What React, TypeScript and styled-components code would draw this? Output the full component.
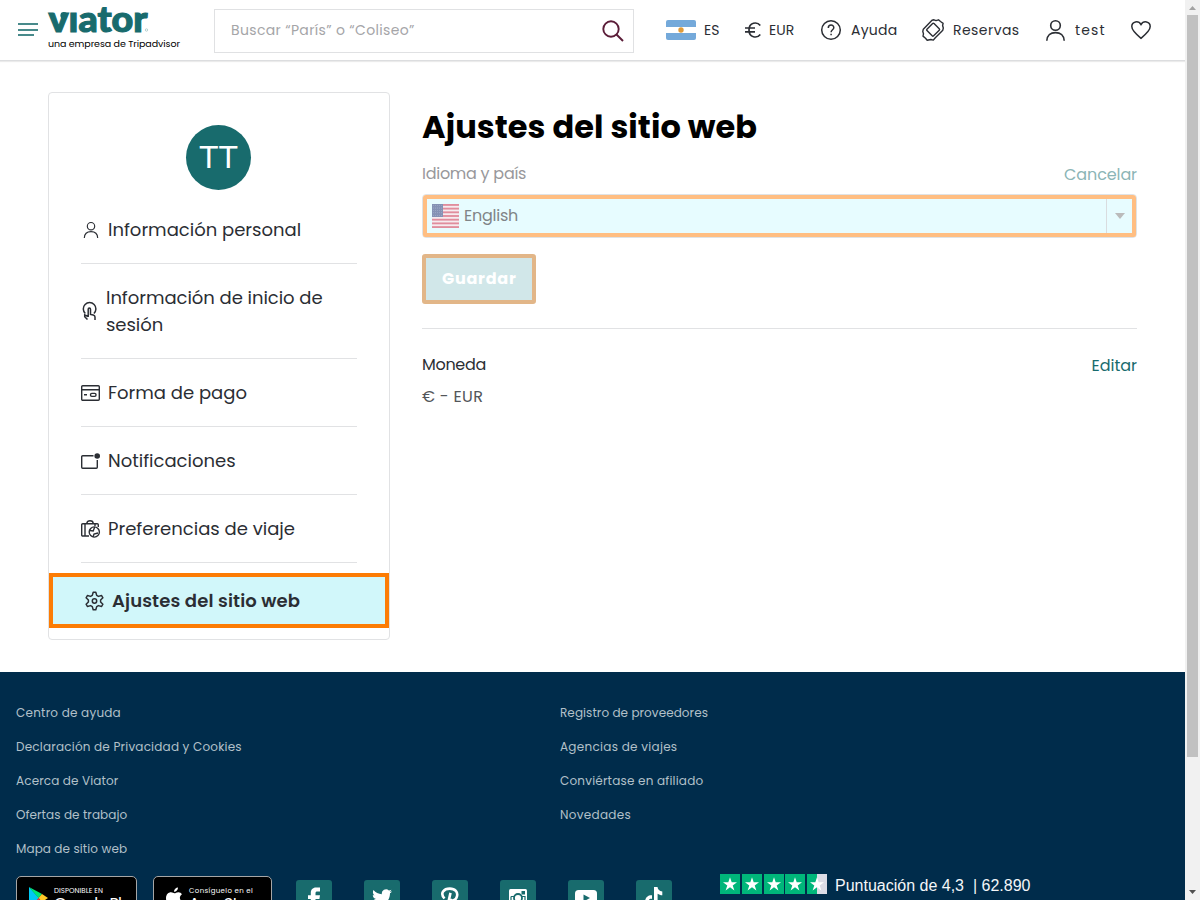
import React from 'react';
import styled, { createGlobalStyle, css } from 'styled-components';

const Global = createGlobalStyle`
  * { box-sizing: border-box; }
  body { margin: 0; background: #fff; overflow: hidden; }
  body, button { font-family: Poppins, Inter, "Open Sans", sans-serif; }
`;

const teal = '#186b6d';
const ink = '#2b2e34';
const line = '#e1e2e4';

const Label = styled.span<{ $tracking?: number }>`
  letter-spacing: ${(p) => p.$tracking ?? 0}px;
`;

const Screen = styled.div`
  display: flex;
  width: 1200px;
  height: 900px;
  overflow: hidden;
`;
const Page = styled.div`
  width: 1185px;
  height: 900px;
  display: flex;
  flex-direction: column;
  overflow: hidden;
`;

/* Scroll bar */
const Scroll = styled.div`
  width: 15px;
  background: #f1f1f1;
  display: flex;
  flex-direction: column;
  align-items: center;
  justify-content: space-between;
`;
const ScrollArrow = styled.svg`
  display: block;
  width: 15px;
  height: 15px;
`;
const Thumb = styled.div`
  width: 11px;
  height: 742px;
  background: #c1c1c1;
  margin-bottom: auto;
`;

/* Header */
const Header = styled.header`
  height: 61px;
  flex: none;
  display: flex;
  align-items: center;
  border-bottom: 1px solid #dcdddf;
  box-shadow: 0 1px 1px rgba(0, 0, 0, 0.08);
  padding-left: 18px;
`;
const Brand = styled.div`
  width: 166px;
  margin-left: 10px;
  height: 60px;
  padding-top: 6px;
`;
const Logo = styled.svg`
  display: block;
  width: 102px;
  height: 28px;
  overflow: visible;
`;
const Tagline = styled.div`
  font-size: 9.5px;
  line-height: 14px;
  color: #000;
  margin-top: 3px;
  letter-spacing: -0.08px;
  white-space: nowrap;
`;
const Search = styled.div`
  width: 420px;
  height: 44px;
  border: 1px solid #e0e1e3;
  display: flex;
  align-items: center;
  justify-content: space-between;
  padding: 0 9px 0 16px;
  font-size: 14px;
  color: #a5a5a8;
  margin-top: 1px;
`;
const NavItem = styled.a<{ $w: number; $gap: number }>`
  display: flex;
  align-items: center;
  width: ${(p) => p.$w}px;
  gap: ${(p) => p.$gap}px;
  font-size: 14px;
  color: ${ink};
`;
const Nav = styled.nav`
  display: flex;
  align-items: center;
  margin-left: 32px;
`;
const Icon = styled.svg<{ $w: number; $h: number; $stroke?: number }>`
  display: block;
  flex: none;
  width: ${(p) => p.$w}px;
  height: ${(p) => p.$h}px;
  fill: none;
  stroke: currentColor;
  stroke-width: ${(p) => p.$stroke ?? 1.5};
  overflow: visible;
`;

/* Body */
const Body = styled.main`
  height: 611px;
  flex: none;
  display: flex;
  padding: 31px 48px 0;
  gap: 32px;
`;
const Card = styled.aside`
  width: 342px;
  height: 548px;
  border: 1px solid ${line};
  border-radius: 4px;
  padding-top: 32px;
  display: flex;
  flex-direction: column;
`;
const Avatar = styled.div`
  width: 65px;
  height: 65px;
  margin: 0 0 6px 137px;
  border-radius: 50%;
  background: ${teal};
  color: #fff;
  font: 32px/65px "Liberation Sans", Arial, sans-serif;
  text-align: center;
`;
const MenuItem = styled.div<{ $active?: boolean; $gap?: number }>`
  display: flex;
  align-items: center;
  gap: ${(p) => p.$gap ?? 8}px;
  font-size: 18px;
  line-height: 27px;
  color: ${ink};
  ${(p) =>
    p.$active
      ? css`
          margin-top: 10px;
          height: 55px;
          border: 4px solid #fc7c04;
          background: #d1f7fa;
          padding-left: 32px;
          font-weight: 600;
        `
      : css`
          margin: 0 32px;
          padding: 20px 0;
          border-bottom: 1px solid ${line};
        `}
`;
const Settings = styled.section`
  width: 715px;
`;
const Title = styled.h1`
  margin: 11px 0 0;
  font-size: 32px;
  line-height: 48px;
  font-weight: 700;
  letter-spacing: 0.08px;
  color: #000;
`;
const Row = styled.div<{ $top: number; $muted?: boolean }>`
  display: flex;
  justify-content: space-between;
  margin-top: ${(p) => p.$top}px;
  font-size: 16px;
  line-height: 24px;
  color: ${(p) => (p.$muted ? '#98989b' : ink)};
`;
const Action = styled.a<{ $muted?: boolean }>`
  color: ${(p) => (p.$muted ? '#8bb5b6' : teal)};
  letter-spacing: ${(p) => (p.$muted ? '-0.1px' : '0')};
  padding-top: 1px;
`;
const Select = styled.div`
  margin-top: 7px;
  height: 44px;
  border: 1px solid #dfe3e6;
  border-radius: 4px;
  display: flex;
`;
const SelectInner = styled.div`
  flex: 1;
  border: 4px solid #ffbe82;
  border-radius: 3px 3px 2px 2px;
  background: #e7fcff;
  display: flex;
  align-items: center;
  padding-left: 5px;
  gap: 5px;
  font-size: 16px;
  line-height: 24px;
  color: #808487;
`;
const Arrow = styled.div`
  margin-left: auto;
  width: 26px;
  height: 34px;
  border-left: 1px solid #d9dcdf;
  display: flex;
  align-items: center;
  justify-content: center;
`;
const Save = styled.button`
  display: flex;
  align-items: center;
  width: 114px;
  height: 50px;
  margin-top: 16px;
  padding: 0 0 2px 16px;
  border: 4px solid #e2b688;
  border-radius: 3px;
  background: #d1e7e9;
  color: #fff;
  font-size: 16px;
  font-weight: 700;
  letter-spacing: 0.75px;
`;
const Rule = styled.div`
  height: 1px;
  background: ${line};
  margin-top: 24px;
`;
const Value = styled.div`
  margin-top: 7px;
  font-size: 16px;
  line-height: 24px;
  letter-spacing: 0.3px;
  color: #53565a;
`;

/* Footer */
const Footer = styled.footer`
  flex: 1;
  min-height: 0;
  background: #002c4b;
  padding: 24px 16px 0;
  overflow: hidden;
`;
const Columns = styled.div`
  display: grid;
  grid-template-columns: 544px 1fr;
`;
const Column = styled.div`
  display: flex;
  flex-direction: column;
`;
const FooterLink = styled.a<{ $tracking: number }>`
  height: 34px;
  line-height: 34px;
  font-size: 12px;
  letter-spacing: ${(p) => p.$tracking}px;
  color: #b2c0c9;
`;
const Bottom = styled.div`
  display: flex;
  align-items: flex-start;
  margin-top: 10px;
`;
const Store = styled.div<{ $w: number; $ml?: number }>`
  width: ${(p) => p.$w}px;
  height: 40px;
  margin-left: ${(p) => p.$ml ?? 0}px;
  background: #000;
  border: 1px solid #a6a6a6;
  border-radius: 5px;
  display: flex;
  padding: 9px 0 0 11px;
  gap: 6px;
  color: #fff;
`;
const StoreText = styled.div`
  display: flex;
  flex-direction: column;
`;
const Small = styled.span<{ $tracking: number }>`
  font-size: 7px;
  line-height: 9px;
  height: 9px;
  white-space: nowrap;
  letter-spacing: ${(p) => p.$tracking}px;
`;
const Big = styled.span<{ $tracking: number }>`
  font-size: 16px;
  line-height: 18px;
  letter-spacing: ${(p) => p.$tracking}px;
  white-space: nowrap;
`;
const Socials = styled.div`
  display: flex;
  gap: 32px;
  margin: 4px 0 0 24px;
`;
const Social = styled.div`
  width: 36px;
  height: 36px;
  border-radius: 3px;
  background: ${teal};
  display: flex;
  align-items: center;
  justify-content: center;
`;
const Rating = styled.div`
  margin: -2px 0 0 48px;
  display: flex;
  gap: 8px;
  color: #f4f6f8;
  font: 16px/23px "Liberation Sans", Arial, sans-serif;
  white-space: pre;
`;
const Stars = styled.div`
  display: flex;
  gap: 1.75px;
  height: 20px;
`;
const Star = styled.div<{ $half?: boolean }>`
  width: 20px;
  height: 20px;
  background: ${(p) => (p.$half ? 'linear-gradient(90deg,#00b67a 50%,#dcdce6 50%)' : '#00b67a')};
`;

const PersonShape = () => (
  <>
    <circle cx="9.5" cy="5.5" r="4.8" />
    <path d="M.8 20.800C1 15.500 4.600 12.600 9.500 12.600s8.500 2.900 8.700 8.200" />
  </>
);

const UsFlag = () => (
  <Icon viewBox="0 0 27 24" $w={27} $h={24} $stroke={0}>
    <rect width="27" height="24" fill="#f6ebef" />
    {[0, 1, 2, 3, 4, 5, 6].map((i) => (
      <rect key={i} y={i * 3.69} width="27" height="1.85" fill="#e08d9d" />
    ))}
    <rect width="11" height="13" fill="#8592b5" />
    {[0, 1, 2, 3, 4].map((r) =>
      [0, 1, 2, 3, 4].map((c) => (
        <circle key={`${r}-${c}`} cx={1.3 + c * 2.1} cy={1.6 + r * 2.4} r=".45" fill="#b9c2d8" />
      )),
    )}
  </Icon>
);

const starPath = 'M10 3.200l1.700 5.100h5.300l-4.300 3.100 1.700 5.100-4.400-3.200-4.400 3.200 1.700-5.100L3 8.300h5.300z';

const footerLinks: { label: string; tracking: number }[][] = [
  [
    { label: 'Centro de ayuda', tracking: 0.22 },
    { label: 'Declaración de Privacidad y Cookies', tracking: 0.2 },
    { label: 'Acerca de Viator', tracking: 0.13 },
    { label: 'Ofertas de trabajo', tracking: 0.08 },
    { label: 'Mapa de sitio web', tracking: 0.1 },
  ],
  [
    { label: 'Registro de proveedores', tracking: 0.07 },
    { label: 'Agencias de viajes', tracking: 0.28 },
    { label: 'Conviértase en afiliado', tracking: 0.2 },
    { label: 'Novedades', tracking: 0.3 },
  ],
];

const socialIcons = [
  <path key="f" fill="#fff" d="M6.800 20v-9H4V7.200h2.800V5C6.800 1.800 8.700-.5 12-.5h4V3.500h-2.500c-1.600 0-2 .6-2 1.800v1.900H16l-.6 3.800h-3.900V20z" />,
  <path key="t" fill="#fff" d="M20 3.200c-.8.4-1.500.5-2.300.6.8-.5 1.400-1.200 1.700-2.100-.8.4-1.600.8-2.500.9a4.100 4.100 0 0 0-7 3.700C6.500 6.200 3.500 4.600 1.500 2.100.4 4 1 6.300 2.700 7.500c-.7 0-1.300-.2-1.900-.5 0 2 1.400 3.700 3.300 4.100-.6.100-1.200.2-1.800 0 .5 1.700 2 2.800 3.800 2.900A8.300 8.300 0 0 1 0 15.700C8.500 20.500 18 15 18 5.300c.8-.6 1.500-1.300 2-2.100z" />,
  <path key="p" fill="none" stroke="#fff" strokeWidth="2.600" d="M4.500 10.500C-.5 5 4 .6 9.800.6c5.500 0 8.200 3.600 7.200 7.600-1.300 5-5.600 5.200-6.900 2.800M10.500 4.900L7.500 18" />,
  <g key="i"><rect x="1" y="1" width="18" height="18" rx="1.500" fill="#fff" /><path d="M3 8.500h3M14 8.500h3v8H3v-8" fill="none" stroke={teal} strokeWidth="1.200" /><circle cx="10" cy="10" r="4" fill="#fff" stroke={teal} strokeWidth="1.800" /><rect x="13.500" y="3" width="3.500" height="3.500" fill={teal} /></g>,
  <g key="y"><rect x="-1" y="2" width="22" height="16" rx="3.500" fill="#fff" /><path d="M7.500 6.500v7l6.500-3.500z" fill={teal} /></g>,
  <path key="k" fill="#fff" d="M10-1h3.500c.3 2.500 2 4.300 4.800 4.600v3.600c-1.800 0-3.400-.6-4.700-1.500v7c0 7-10 8-12 2C.2 10.500 3.600 6.700 8 7.200v3.700c-2-.5-3.600.7-3.400 2.600.3 3 5.400 2.800 5.400-1z" />,
];

export default function App() {
  return (
    <Screen>
      <Global />
      <Page>
        <Header>
          <Icon viewBox="0 0 20 14" $w={20} $h={14} $stroke={1.8}>
            <path d="M0 1h20M0 7h20M0 12h16" stroke="#488a8b" />
          </Icon>
          <Brand>
            <Logo viewBox="0 0 102 28" aria-label="viator">
              <g fill={teal} stroke={teal} strokeWidth="1.1">
                <text x="0.5" y="25.500" fontFamily="Lato, sans-serif" fontWeight="900" fontSize="36" textLength="99" lengthAdjust="spacingAndGlyphs">vıator</text>
                <circle cx="15.800" cy="9.500" r="3.400" stroke="none" />
              </g>
              <circle cx="98.500" cy="24" r="1.200" fill="#fff" stroke="#8bb5b6" strokeWidth=".6" />
            </Logo>
            <Tagline>una empresa de Tripadvisor</Tagline>
          </Brand>
          <Search>
            <Label $tracking={0.35}>Buscar “París” o “Coliseo”</Label>
            <Icon viewBox="0 0 22 22" $w={22} $h={22} $stroke={1.9}>
              <g stroke="#5b1d38"><circle cx="9" cy="9" r="7.700" /><path d="M14.500 14.500l6.500 6.500" /></g>
            </Icon>
          </Search>
          <Nav>
            <NavItem $w={79} $gap={8}>
              <Icon viewBox="0 0 30 20" $w={30} $h={20} $stroke={0}>
                <rect width="30" height="20" rx="2" fill="#74a9da" />
                <rect y="7" width="30" height="6" fill="#fff" />
                <circle cx="15" cy="10" r="2.700" fill="#e09b3a" />
              </Icon>
              <Label>ES</Label>
            </NavItem>
            <NavItem $w={76} $gap={8}>
              <Icon viewBox="0 0 16 16" $w={16} $h={16} $stroke={1.7}>
                <path d="M15.300 3.500C12-.6 4 .2 4 8s8 8.600 11.300 4.500M0 6h10M0 9.800h10" />
              </Icon>
              <Label>EUR</Label>
            </NavItem>
            <NavItem $w={101} $gap={10}>
              <Icon viewBox="0 0 20 20" $w={20} $h={20} $stroke={1.5}>
                <circle cx="10" cy="10" r="9.300" />
                <path d="M7.300 8c0-4 5.700-3.800 5.500-.2-.1 2-2.700 2-2.700 4.400M10.100 13.800v1.500" />
              </Icon>
              <Label $tracking={0.25}>Ayuda</Label>
            </NavItem>
            <NavItem $w={124} $gap={9}>
              <Icon viewBox="0 0 22 22" $w={22} $h={22} $stroke={1.4}>
                <path strokeLinejoin="round" d="M10 1.200l2-.4 2 .8 2.500-.8 2 1.700 2.600 1.800-.5 2.200.7 2.500-.5 2.200-7.500 7.500-2 2.400-2.400-.6-3.700.8-1.700-2-2.500-2.200.5-2.200-.7-2.400.5-2.300z" />
                <rect x="6.400" y="5.700" width="9.400" height="10" rx="1" transform="rotate(45 11.100 10.700)" />
              </Icon>
              <Label $tracking={0.45}>Reservas</Label>
            </NavItem>
            <NavItem $w={85} $gap={10}>
              <Icon viewBox="0 0 19 21" $w={19} $h={21} $stroke={1.6}><PersonShape /></Icon>
              <Label $tracking={1.1}>test</Label>
            </NavItem>
            <NavItem $w={20} $gap={0}>
              <Icon viewBox="0 0 20 18" $w={20} $h={18} $stroke={1.5}>
                <path d="M10 17.300C6 14 .8 9.800.8 5.600.8.300 7.500-.8 10 3.600 12.500-.8 19.200.3 19.200 5.600c0 4.200-5.200 8.400-9.200 11.700z" />
              </Icon>
            </NavItem>
          </Nav>
        </Header>

        <Body>
          <Card>
            <Avatar>TT</Avatar>
            <MenuItem $gap={7}>
              <Icon viewBox="-2.500 -2.500 24 26" $w={20} $h={20} $stroke={1.5}><PersonShape /></Icon>
              <Label>Información personal</Label>
            </MenuItem>
            <MenuItem $gap={7}>
              <Icon viewBox="0 0 18 20" $w={18} $h={20} $stroke={1.5}>
                <path d="M4.300 12.500a6.300 6.300 0 1 1 8.600 0" />
                <path d="M7.200 16V8.200c0-1.600 2.300-1.600 2.300 0v5.300l2.700.6c1.300.3 1.800 1 1.800 2v3M7.200 15.500l-3.500-1.500v1.800l2.800 2.700" />
              </Icon>
              <Label $tracking={-0.04}>Información de inicio de sesión</Label>
            </MenuItem>
            <MenuItem $gap={8}>
              <Icon viewBox="0 0 19 16" $w={19} $h={16} $stroke={1.4}>
                <rect x=".7" y=".7" width="17.600" height="14.600" rx="1" />
                <path d="M1 4.700h17M3 9.800h3" />
                <rect x="9.500" y="8.400" width="5.500" height="3" rx="1.300" />
              </Icon>
              <Label>Forma de pago</Label>
            </MenuItem>
            <MenuItem $gap={8}>
              <Icon viewBox="0 0 19 16" $w={19} $h={16} $stroke={1.4}>
                <path d="M12.500 2.700H1.700a1 1 0 0 0-1 1v10.600a1 1 0 0 0 1 1h13.600a1 1 0 0 0 1-1V7" />
                <circle cx="16.200" cy="3" r="2.800" fill={ink} stroke="none" />
              </Icon>
              <Label>Notificaciones</Label>
            </MenuItem>
            <MenuItem $gap={8}>
              <Icon viewBox="0 0 19 18" $w={19} $h={18} $stroke={1.4}>
                <path d="M8 16H1.700a1 1 0 0 1-1-1V4.700a1 1 0 0 1 1-1h14.600a1 1 0 0 1 1 1V7M4 3.700V16M14 3.700V6M5.800 3.500C5.800-.2 12.200-.2 12.200 3.500" />
                <circle cx="13.300" cy="12" r="5.100" />
                <path d="M8.700 10.500l3.500.5 1.500-4M12 17l1-3 4-1" />
              </Icon>
              <Label>Preferencias de viaje</Label>
            </MenuItem>
            <MenuItem $active $gap={8}>
              <Icon viewBox="0 0 19 20" $w={19} $h={20} $stroke={1.5}>
                <path d="M8.200 1.200h2.600l.9 3.200 1.700 1 3.200-.9 1.300 2.300L15.600 9v2l2.300 2.200-1.300 2.300-3.200-.9-1.700 1-.9 3.200H8.200l-.9-3.200-1.700-1-3.200.9-1.300-2.300L3.400 11V9L1.100 6.800l1.300-2.300 3.200.9 1.700-1z" strokeLinejoin="round" />
                <circle cx="9.500" cy="10" r="2.200" />
              </Icon>
              <Label $tracking={0.13}>Ajustes del sitio web</Label>
            </MenuItem>
          </Card>

          <Settings>
            <Title>Ajustes del sitio web</Title>
            <Row $top={11} $muted>
              <Label $tracking={-0.27}>Idioma y país</Label>
              <Action $muted>Cancelar</Action>
            </Row>
            <Select>
              <SelectInner>
                <UsFlag />
                <Label $tracking={-0.25}>English</Label>
                <Arrow>
                  <Icon viewBox="0 0 10 6" $w={10} $h={6} $stroke={0}><path d="M0 0h10L5 6z" fill="#bbb" /></Icon>
                </Arrow>
              </SelectInner>
            </Select>
            <Save>Guardar</Save>
            <Rule />
            <Row $top={24}>
              <Label $tracking={-0.3}>Moneda</Label>
              <Action>Editar</Action>
            </Row>
            <Value>€ - EUR</Value>
          </Settings>
        </Body>

        <Footer>
          <Columns>
            {footerLinks.map((links, i) => (
              <Column key={i}>
                {links.map(({ label, tracking }) => (
                  <FooterLink key={label} $tracking={tracking}>{label}</FooterLink>
                ))}
              </Column>
            ))}
          </Columns>
          <Bottom>
            <Store $w={121}>
              <Icon viewBox="0 0 20 24" $w={20} $h={24} $stroke={0}>
                <path d="M1 1l10 11L1 23z" fill="#00c8f5" />
                <path d="M1 1l13 7-3.500 4z" fill="#00e676" />
                <path d="M14 8l6 4-6 4-3.500-4z" fill="#ffc928" />
                <path d="M1 23l13-7-3.500-4z" fill="#f63448" />
              </Icon>
              <StoreText>
                <Small $tracking={0.05}>DISPONIBLE EN</Small>
                <Big $tracking={-0.9}>Google Play</Big>
              </StoreText>
            </Store>
            <Store $w={119} $ml={16}>
              <Icon viewBox="0 0 18 22" $w={18} $h={22} $stroke={0}>
                <path fill="#fff" d="M13 1.500c.1 2-1.800 4.300-4 4.200C8.800 3.500 11 1.500 13 1.500zM9.500 7.300c1 0 2-1.200 4-1.100 1.400.1 2.700.8 3.500 2-3.200 2-2.700 6.300.7 7.600-1 2.700-2.600 5.200-4.600 5.200-1.300 0-1.800-.8-3.400-.8s-2.100.8-3.400.8c-2.500 0-5.300-4.600-5.300-8.700 0-4 2.500-6 5-6 1.600 0 2.700 1 3.500 1z" />
              </Icon>
              <StoreText>
                <Small $tracking={0.38}>Consíguelo en el</Small>
                <Big $tracking={-0.5}>App Store</Big>
              </StoreText>
            </Store>
            <Socials>
              {socialIcons.map((shape, i) => (
                <Social key={i}>
                  <Icon viewBox="0 0 20 20" $w={20} $h={20} $stroke={0}>{shape}</Icon>
                </Social>
              ))}
            </Socials>
            <Rating>
              <Stars>
                {[0, 1, 2, 3, 4].map((i) => (
                  <Star key={i} $half={i === 4}>
                    <Icon viewBox="0 0 20 20" $w={20} $h={20} $stroke={0}><path d={starPath} fill="#fff" /></Icon>
                  </Star>
                ))}
              </Stars>
              <Label>{'Puntuación de 4,3  | 62.890'}</Label>
            </Rating>
          </Bottom>
        </Footer>
      </Page>
      <Scroll>
        <ScrollArrow viewBox="0 0 15 15"><path d="M4 10h7L7.500 6z" fill="#a3a3a3" /></ScrollArrow>
        <Thumb />
        <ScrollArrow viewBox="0 0 15 15"><path d="M4 5h7L7.500 9z" fill="#505050" /></ScrollArrow>
      </Scroll>
    </Screen>
  );
}
